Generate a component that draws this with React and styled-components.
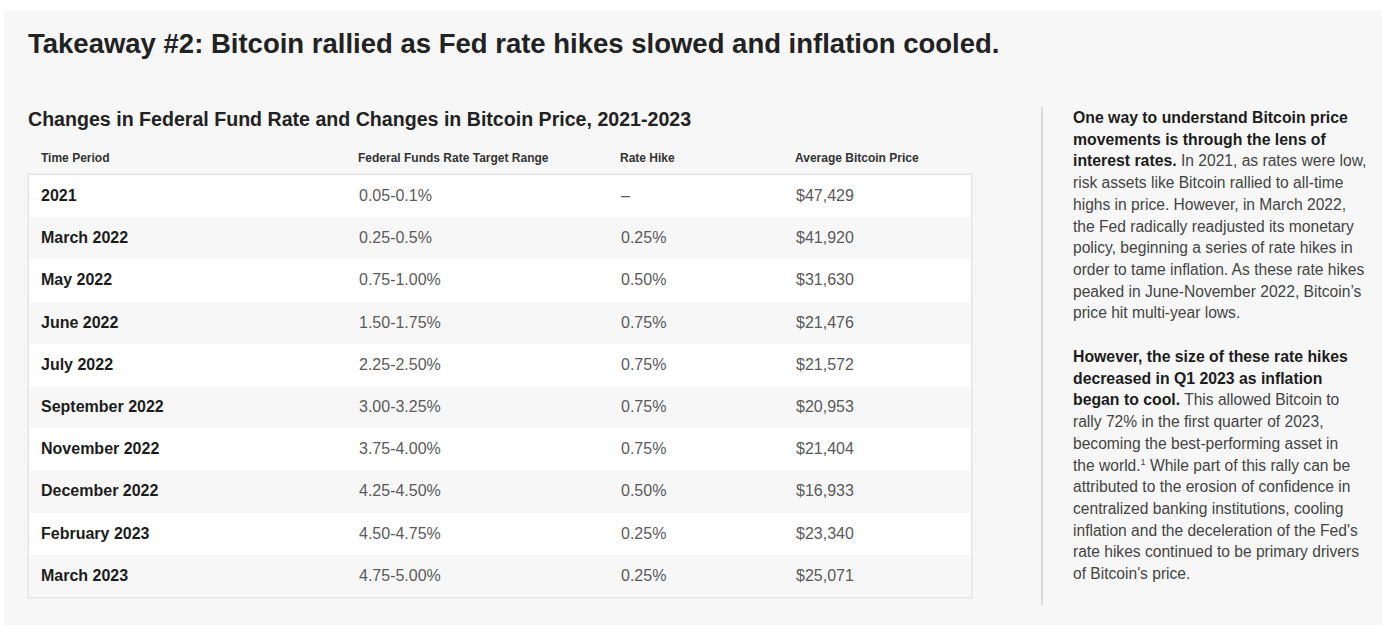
import React from 'react';
import styled, { createGlobalStyle } from 'styled-components';

const GlobalStyle = createGlobalStyle`
  html, body {
    margin: 0;
    padding: 0;
    background: #ffffff;
  }
  body {
    font-family: "Liberation Sans", Arial, sans-serif;
    color: #222;
  }
`;

const rows = [
  { period: '2021', range: '0.05-0.1%', hike: '–', price: '$47,429' },
  { period: 'March 2022', range: '0.25-0.5%', hike: '0.25%', price: '$41,920' },
  { period: 'May 2022', range: '0.75-1.00%', hike: '0.50%', price: '$31,630' },
  { period: 'June 2022', range: '1.50-1.75%', hike: '0.75%', price: '$21,476' },
  { period: 'July 2022', range: '2.25-2.50%', hike: '0.75%', price: '$21,572' },
  { period: 'September 2022', range: '3.00-3.25%', hike: '0.75%', price: '$20,953' },
  { period: 'November 2022', range: '3.75-4.00%', hike: '0.75%', price: '$21,404' },
  { period: 'December 2022', range: '4.25-4.50%', hike: '0.50%', price: '$16,933' },
  { period: 'February 2023', range: '4.50-4.75%', hike: '0.25%', price: '$23,340' },
  { period: 'March 2023', range: '4.75-5.00%', hike: '0.25%', price: '$25,071' },
];

const Page = styled.div`
  padding: 10px 0 2px 4px;
`;

const Panel = styled.section`
  background: #f7f7f7;
  padding: 18px 24px 20px 24px;
  min-height: 614px;
  box-sizing: border-box;
`;

const Title = styled.h1`
  margin: 0;
  font-size: 27.5px;
  line-height: 32px;
  font-weight: 700;
  color: #222;
`;

const Body = styled.div`
  display: flex;
  align-items: flex-start;
  margin-top: 47px;
`;

const ChartSection = styled.div`
  width: 944px;
  flex-shrink: 0;
`;

const Subtitle = styled.h2`
  margin: 0;
  font-size: 19.6px;
  line-height: 24px;
  font-weight: 700;
  color: #222;
`;

const Grid = styled.div`
  display: grid;
  grid-template-columns: 330px 262px 175px 1fr;
  align-items: center;
`;

const HeadRow = styled(Grid)`
  height: 32px;
  margin-top: 11px;
  font-size: 12px;
  font-weight: 700;
  color: #333;
`;

const Box = styled.div`
  border: 1px solid #e4e4e4;
  box-shadow: 0 0 0 1px #eeeeee;
`;

const Row = styled(Grid)`
  height: 42.2px;
  background: ${(p) => (p.$shaded ? '#f7f7f7' : '#ffffff')};
  font-size: 16px;
`;

const Cell = styled.div`
  padding-left: ${(p) => (p.$first ? '12px' : '0')};
  font-weight: ${(p) => (p.$first ? 700 : 400)};
  color: ${(p) => (p.$first ? '#1c1c1c' : '#5a5a5a')};
  white-space: nowrap;
`;

const HeadCell = styled.div`
  padding-left: ${(p) => (p.$first ? '13px' : '0')};
`;

const Aside = styled.aside`
  margin-left: 69px;
  border-left: 2px solid #d9d9d9;
  padding: 0 0 20px 30px;
  width: 304px;
  flex-shrink: 0;
`;

const Para = styled.p`
  margin: 0 0 22px 0;
  font-size: 15.6px;
  line-height: 21.7px;
  color: #444;
  white-space: nowrap;

  &:last-child {
    margin-bottom: 0;
  }

  strong {
    color: #1c1c1c;
    font-weight: 700;
    font-size: 15.8px;
  }

  sup {
    font-size: 9px;
    line-height: 0;
    vertical-align: 6px;
  }
`;

export default function App() {
  return (
    <>
      <GlobalStyle />
      <Page>
        <Panel>
          <Title>Takeaway #2: Bitcoin rallied as Fed rate hikes slowed and inflation cooled.</Title>
          <Body>
            <ChartSection>
              <Subtitle>Changes in Federal Fund Rate and Changes in Bitcoin Price, 2021-2023</Subtitle>
              <HeadRow>
                <HeadCell $first>Time Period</HeadCell>
                <HeadCell>Federal Funds Rate Target Range</HeadCell>
                <HeadCell>Rate Hike</HeadCell>
                <HeadCell>Average Bitcoin Price</HeadCell>
              </HeadRow>
              <Box>
                {rows.map((r, i) => (
                  <Row key={r.period} $shaded={i % 2 === 1}>
                    <Cell $first>{r.period}</Cell>
                    <Cell>{r.range}</Cell>
                    <Cell>{r.hike}</Cell>
                    <Cell>{r.price}</Cell>
                  </Row>
                ))}
              </Box>
            </ChartSection>
            <Aside>
              <Para>
                <strong>
                  One way to understand Bitcoin price
                  <br />
                  movements is through the lens of
                  <br />
                  interest rates.
                </strong>{' '}
                In 2021, as rates were low,
                <br />
                risk assets like Bitcoin rallied to all-time
                <br />
                highs in price. However, in March 2022,
                <br />
                the Fed radically readjusted its monetary
                <br />
                policy, beginning a series of rate hikes in
                <br />
                order to tame inflation. As these rate hikes
                <br />
                peaked in June-November 2022, Bitcoin’s
                <br />
                price hit multi-year lows.
              </Para>
              <Para>
                <strong>
                  However, the size of these rate hikes
                  <br />
                  decreased in Q1 2023 as inflation
                  <br />
                  began to cool.
                </strong>{' '}
                This allowed Bitcoin to
                <br />
                rally 72% in the first quarter of 2023,
                <br />
                becoming the best-performing asset in
                <br />
                the world.<sup>1</sup> While part of this rally can be
                <br />
                attributed to the erosion of confidence in
                <br />
                centralized banking institutions, cooling
                <br />
                inflation and the deceleration of the Fed's
                <br />
                rate hikes continued to be primary drivers
                <br />
                of Bitcoin's price.
              </Para>
            </Aside>
          </Body>
        </Panel>
      </Page>
    </>
  );
}
